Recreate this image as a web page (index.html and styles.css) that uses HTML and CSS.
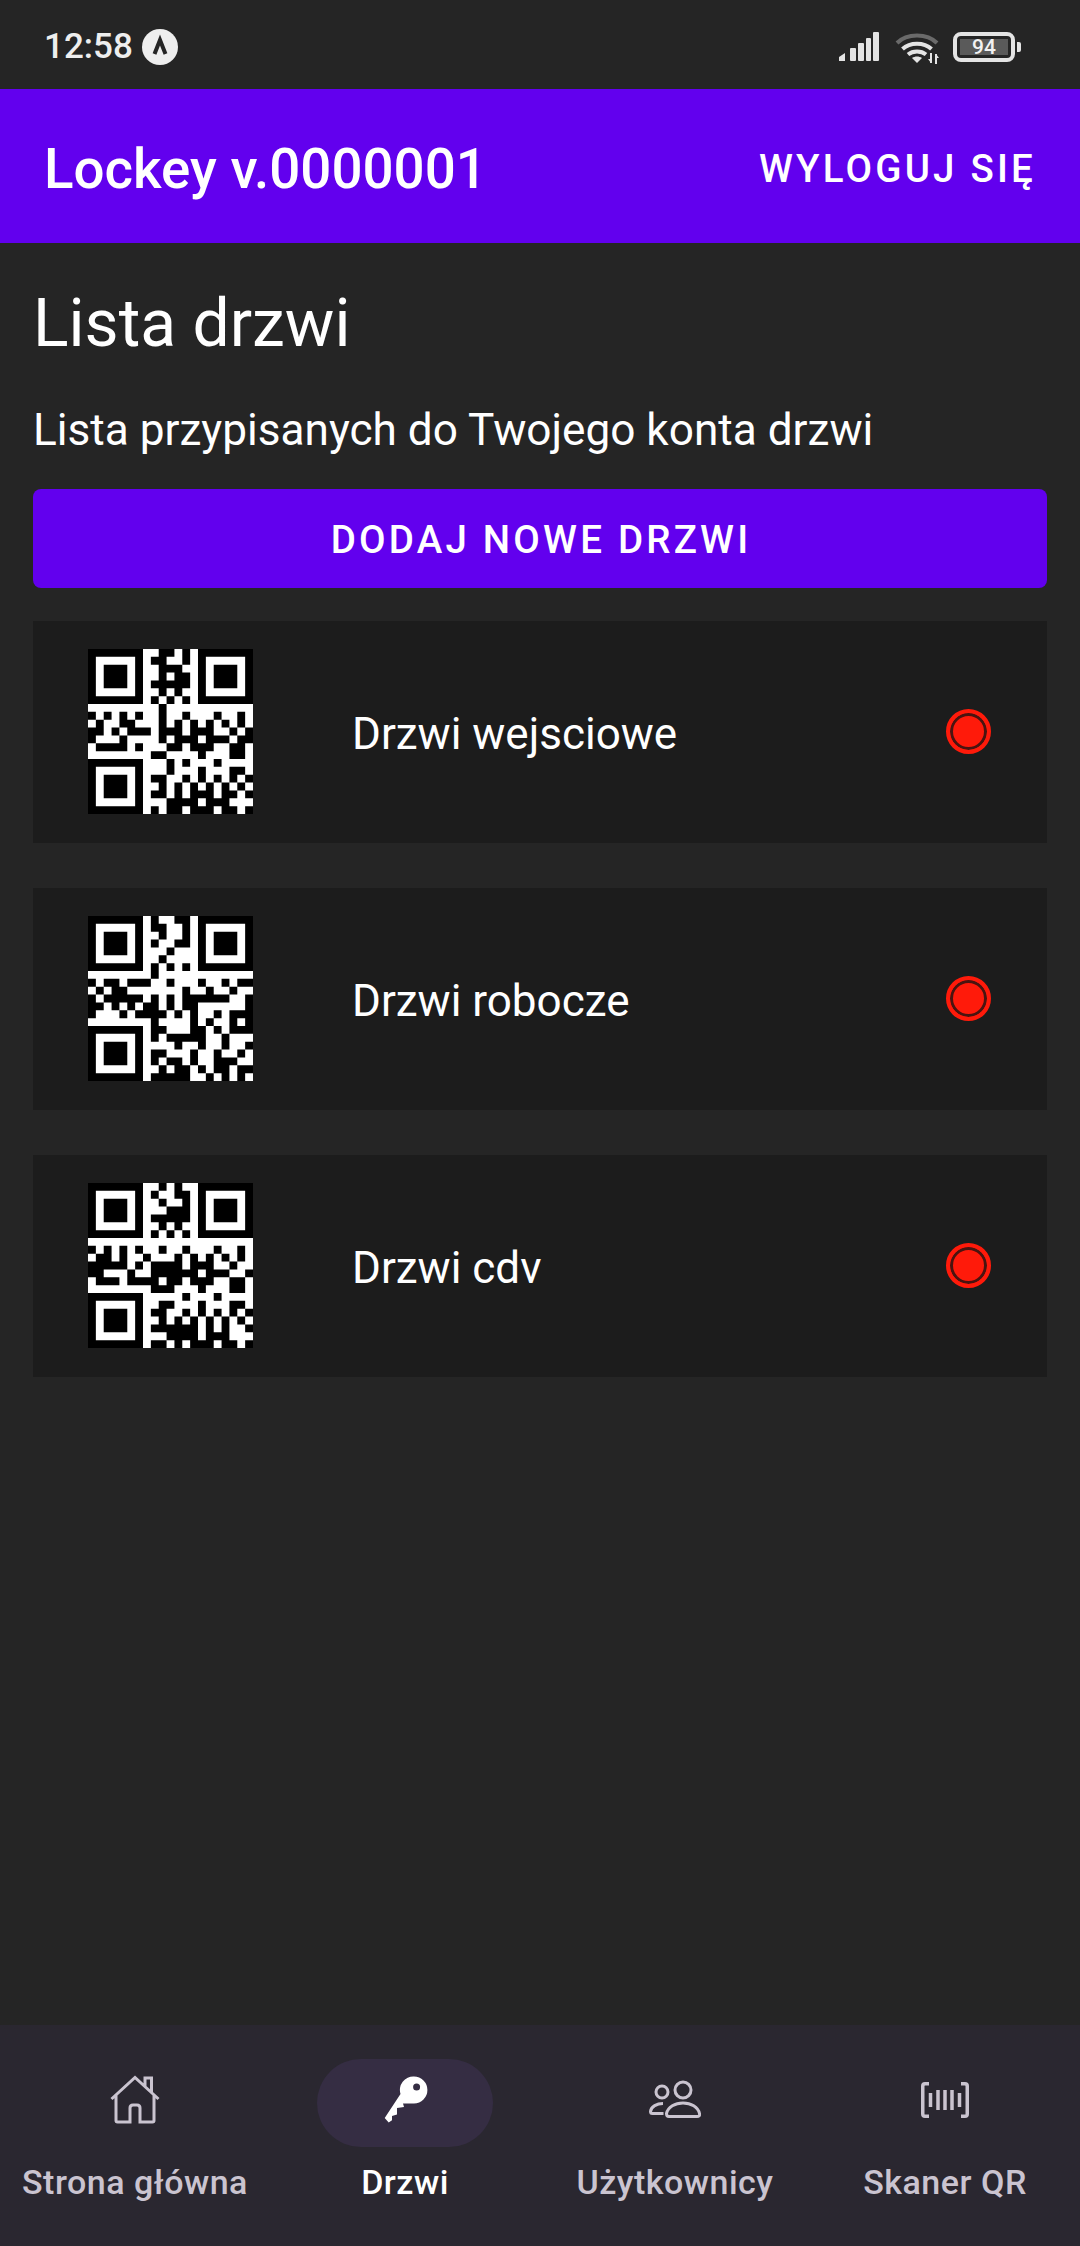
FILE: index.html
```html
<!DOCTYPE html>
<html lang="pl">
<head>
<meta charset="utf-8">
<title>Lockey</title>
<link rel="stylesheet" href="styles.css">
</head>
<body>
<div class="app">
  <div class="status">
    <div class="status-left">
      <span class="time">12:58</span>
      <svg class="badge" viewBox="0 0 36 36"><circle cx="18" cy="18" r="18" fill="#eee"/><path d="M12.500 25 18 11l5.500 14" fill="none" stroke="#252525" stroke-width="4"/></svg>
    </div>
    <div class="status-right">
      <svg class="signal" viewBox="0 0 40 29"><g fill="#e4e4e4"><path d="M0 29v-4l6-4v8z"/><rect x="11" y="16" width="6" height="13" rx="1"/><rect x="19" y="11" width="6" height="18" rx="1" /><rect x="27" y="6" width="5" height="23" rx="1"/><rect x="34" y="0" width="6" height="29" rx="1"/></g></svg>
      <svg class="wifi" viewBox="0 0 44 32"><path d="M2 11C12 1 32 1 42 11" fill="none" stroke="#6a6a6a" stroke-width="4"/><path d="M7.500 17C15 10 29 10 36.500 17M13 22.500c5-4 13-4 18 0" fill="none" stroke="#e4e4e4" stroke-width="4"/><path d="M22 31l-5-5c3-2 7-2 10 0z" fill="#e4e4e4"/><path d="M36 21v10M41 22v10" stroke="#e4e4e4" stroke-width="2"/><path d="M33 27l3 4v-4zM44 26l-3-4v4z" fill="#e4e4e4"/></svg>
      <div class="battery"><div class="battery-body"><span class="battery-level">94</span></div><span class="battery-nub"></span></div>
    </div>
  </div>

  <header class="appbar">
    <span class="app-title">Lockey v.0000001</span>
    <span class="logout">WYLOGUJ SIĘ</span>
  </header>

  <main class="content">
    <h1 class="title">Lista drzwi</h1>
    <p class="subtitle">Lista przypisanych do Twojego konta drzwi</p>
    <div class="add-btn">DODAJ NOWE DRZWI</div>

    <div class="door">
      <svg class="qr" viewBox="0 0 21 21">
        <rect width="21" height="21" fill="#fff"/>
        <path class="finder" d="M0 0h7v7H0zM1 1v5h5V1zM14 0h7v7h-7zM15 1v5h5V1zM0 14h7v7H0zM1 15v5h5v-5z"/>
        <path class="finder" d="M2 2h3v3H2zM16 2h3v3h-3zM2 16h3v3H2z"/>
        <path class="mods" d="M9 .5h2M12 .5h1M8 1.500h2M12 1.500h1M9 2.500h3M9 3.500h1M11 3.500h2M8 4.500h5M9 5.500h1M11 5.500h1M8 6.500h1M10 6.500h1M12 6.500h1M9 7.500h1M0 8.500h1M2 8.500h1M4 8.500h1M6 8.500h1M9 8.500h1M12 8.500h1M16 8.500h1M19 8.500h1M1 9.500h1M4 9.500h2M9 9.500h1M11 9.500h1M13 9.500h1M15 9.500h1M17 9.500h1M19 9.500h1M0 10.500h2M3 10.500h1M5 10.500h3M9 10.500h3M13 10.500h3M18 10.500h1M20 10.500h1M0 11.500h1M4 11.500h1M9 11.500h1M11 11.500h3M15 11.500h3M19 11.500h2M1 12.500h4M6 12.500h1M10 12.500h2M13 12.500h3M18 12.500h2M8 13.500h2M14 13.500h1M18 13.500h2M10 14.500h1M12 14.500h1M16 14.500h1M10 15.500h1M14 15.500h1M18 15.500h2M8 16.500h2M12 16.500h1M14 16.500h1M16 16.500h1M18 16.500h1M20 16.500h1M9 17.500h1M11 17.500h1M13 17.500h1M15 17.500h1M17 17.500h1M19 17.500h1M8 18.500h2M11 18.500h1M13 18.500h3M17 18.500h2M20 18.500h1M10 19.500h4M15 19.500h3M8 20.500h1M10 20.500h2M13 20.500h3M17 20.500h2M20 20.500h1"/>
      </svg>
      <span class="door-name">Drzwi wejsciowe</span>
      <span class="led"></span>
    </div>

    <div class="door">
      <svg class="qr" viewBox="0 0 21 21">
        <rect width="21" height="21" fill="#fff"/>
        <path class="finder" d="M0 0h7v7H0zM1 1v5h5V1zM14 0h7v7h-7zM15 1v5h5V1zM0 14h7v7H0zM1 15v5h5v-5z"/>
        <path class="finder" d="M2 2h3v3H2zM16 2h3v3h-3zM2 16h3v3H2z"/>
        <path class="mods" d="M8 .5h1M11 .5h2M8 1.500h2M12 1.500h1M9 2.500h1M12 2.500h1M8 3.500h1M11 3.500h2M10 4.500h1M9 5.500h1M8 6.500h1M10 6.500h1M12 6.500h1M8 7.500h1M0 8.500h1M2 8.500h2M5 8.500h3M10 8.500h1M14 8.500h1M17 8.500h1M19 8.500h2M1 9.500h1M3 9.500h2M12 9.500h1M15 9.500h1M18 9.500h1M0 10.500h1M2 10.500h5M8 10.500h1M10 10.500h1M12 10.500h6M20 10.500h1M0 11.500h2M3 11.500h1M5 11.500h1M7 11.500h2M10 11.500h1M12 11.500h2M20 11.500h1M0 12.500h1M4 12.500h1M6 12.500h4M11 12.500h1M13 12.500h1M16 12.500h1M18 12.500h3M8 13.500h1M13 13.500h1M15 13.500h1M18 13.500h1M20 13.500h1M8 14.500h2M13 14.500h2M16 14.500h1M18 14.500h3M8 15.500h1M10 15.500h5M17 15.500h1M11 16.500h1M14 16.500h1M17 16.500h1M20 16.500h1M8 17.500h2M13 17.500h1M16 17.500h1M19 17.500h1M8 18.500h1M10 18.500h2M13 18.500h1M16 18.500h3M9 19.500h1M11 19.500h2M14 19.500h1M16 19.500h2M19 19.500h2M8 20.500h5M15 20.500h1M17 20.500h1M19 20.500h1"/>
      </svg>
      <span class="door-name">Drzwi robocze</span>
      <span class="led"></span>
    </div>

    <div class="door">
      <svg class="qr" viewBox="0 0 21 21">
        <rect width="21" height="21" fill="#fff"/>
        <path class="finder" d="M0 0h7v7H0zM1 1v5h5V1zM14 0h7v7h-7zM15 1v5h5V1zM0 14h7v7H0zM1 15v5h5v-5z"/>
        <path class="finder" d="M2 2h3v3H2zM16 2h3v3h-3zM2 16h3v3H2z"/>
        <path class="mods" d="M9 .5h1M11 .5h1M8 1.500h1M11 1.500h2M9 2.500h1M12 2.500h1M10 3.500h3M8 4.500h5M9 5.500h1M11 5.500h1M8 6.500h1M10 6.500h1M12 6.500h1M0 8.500h1M2 8.500h1M4 8.500h1M6 8.500h1M9 8.500h1M12 8.500h1M16 8.500h1M19 8.500h1M1 9.500h2M4 9.500h1M7 9.500h1M11 9.500h1M13 9.500h1M15 9.500h1M17 9.500h1M19 9.500h1M0 10.500h5M6 10.500h1M8 10.500h4M13 10.500h3M18 10.500h1M0 11.500h2M5 11.500h1M8 11.500h6M15 11.500h3M20 11.500h1M1 12.500h3M5 12.500h4M10 12.500h2M13 12.500h3M18 12.500h2M8 13.500h3M14 13.500h1M18 13.500h2M12 14.500h1M16 14.500h1M9 15.500h2M14 15.500h1M18 15.500h2M8 16.500h2M12 16.500h1M14 16.500h1M16 16.500h1M18 16.500h1M20 16.500h1M9 17.500h1M11 17.500h1M13 17.500h1M15 17.500h1M17 17.500h1M19 17.500h1M8 18.500h6M15 18.500h1M17 18.500h1M20 18.500h1M10 19.500h4M15 19.500h3M8 20.500h2M11 20.500h1M13 20.500h3M17 20.500h2M20 20.500h1"/>
      </svg>
      <span class="door-name">Drzwi cdv</span>
      <span class="led"></span>
    </div>
  </main>

  <nav class="nav">
    <div class="nav-item">
      <div class="nav-icon">
        <svg class="ico-home" viewBox="0 0 50 50"><path d="M1.500 24 25 2.500 48.500 24M6 20v25.500q0 1.500 1.500 1.500H20V33q0-3 3-3h4q3 0 3 3v14h12.500q1.500 0 1.500-1.500V20M35 11V3h6.500v14.500" fill="none" stroke="#cac4d0" stroke-width="3"/></svg>
      </div>
      <span class="nav-label">Strona główna</span>
    </div>
    <div class="nav-item active">
      <div class="nav-icon">
        <svg class="ico-key" viewBox="0 0 48 48"><path fill-rule="evenodd" d="M33 .6a13.400 13.400 0 0 1 0 26.800l-3 0-8 0 1 3.600-7 1 0 6.500-5 1.500 0 4.300-3.300 2.200-4-4.600L19.500 18A13.400 13.400 0 0 1 33 .6zM35.600 7.500a3.500 3.500 0 1 0 0 7 3.500 3.500 0 0 0 0-7z" fill="#fff"/></svg>
      </div>
      <span class="nav-label">Drzwi</span>
    </div>
    <div class="nav-item">
      <div class="nav-icon">
        <svg class="ico-users" viewBox="0 0 52 40"><g fill="none" stroke="#cac4d0" stroke-width="3"><circle cx="34" cy="10" r="8"/><circle cx="13" cy="12" r="6"/><path d="M14 23.500c-6 0-12 3-12.500 8 0 1.500 1 2 2 2h11"/><path d="M34 23c-8 0-15 4-16.500 10.500 0 2 1 3 2.500 3h28c2 0 3-1 2.500-3C49 27 42 23 34 23z"/></g></svg>
      </div>
      <span class="nav-label">Użytkownicy</span>
    </div>
    <div class="nav-item">
      <div class="nav-icon">
        <svg class="ico-scan" viewBox="0 0 48 36"><g fill="none" stroke="#cac4d0" stroke-width="3.500"><path d="M8 1.750H4q-2.250 0-2.250 2.250v28q0 2.250 2.250 2.250h4M40 1.750h4q2.250 0 2.250 2.250v28q0 2.250-2.250 2.250h-4"/><path d="M9.500 11v14M17 8v20M24 8v20M31 8v20M38.500 11v14"/></g></svg>
      </div>
      <span class="nav-label">Skaner QR</span>
    </div>
  </nav>
</div>
</body>
</html>
```
FILE: styles.css
```css
* { box-sizing: border-box; }
html, body { margin: 0; padding: 0; }
body { width: 1080px; height: 2246px; background: #252525; font-family: Roboto, "Noto Sans", sans-serif; color: #fff; overflow: hidden; }
.app { display: flex; flex-direction: column; width: 1080px; height: 2246px; }

.status { flex: none; height: 89px; display: flex; align-items: flex-start; justify-content: space-between; padding: 29px 59px 0 44px; }
.status-left { display: flex; align-items: center; gap: 9px; height: 36px; }
.time { font-size: 35px; font-weight: 500; color: #eee; line-height: 36px; }
.badge { width: 36px; height: 36px; }
.status-right { display: flex; align-items: flex-start; padding-top: 3px; }
.signal { width: 40px; height: 29px; margin-right: 16px; }
.wifi { width: 44px; height: 32px; margin-right: 14px; }
.battery { display: flex; align-items: center; height: 30px; }
.battery-body { width: 62px; height: 30px; border: 4px solid #e4e4e4; border-radius: 8px; padding: 3px; display: flex; }
.battery-level { flex: 1; background: #5a5a5a; color: #f2f2f2; font-size: 21px; font-weight: 500; line-height: 16px; text-align: center; }
.battery-nub { width: 4px; height: 10px; margin-left: 2px; background: #e4e4e4; border-radius: 0 2px 2px 0; }

.appbar { flex: none; height: 154px; background: #6200ee; display: flex; align-items: center; justify-content: space-between; padding: 5px 44px 0 44px; }
.app-title { font-size: 54.7px; font-weight: 500; }
.logout { font-size: 38.5px; font-weight: 500; letter-spacing: 3.2px; }

.content { flex: 1; padding: 0 33px; display: flex; flex-direction: column; }
.title { margin: 42px 0 0; font-size: 66px; font-weight: 400; line-height: 77px; }
.subtitle { margin: 42px 0 0; font-size: 44.15px; line-height: 52px; font-weight: 400; }
.add-btn { margin-top: 33px; height: 99px; padding: 2px 0 0 2px; background: #6200ee; border-radius: 8px; display: flex; align-items: center; justify-content: center; font-size: 38.5px; font-weight: 500; letter-spacing: 3.2px; }

.door { height: 222px; margin-top: 33px; background: #1c1c1c; display: flex; align-items: center; padding: 0 56px 1px 55px; }
.door + .door { margin-top: 45px; }
.qr { flex: none; width: 165px; height: 165px; }
.finder { fill: #000; fill-rule: evenodd; }
.mods { fill: none; stroke: #000; stroke-width: 1; }
.door-name { margin-left: 99px; padding-top: 4px; flex: 1; font-size: 44px; }
.led { flex: none; width: 45px; height: 45px; border-radius: 50%; background: #ff1a0a; border: 4px solid #ff1a0a; box-shadow: inset 0 0 0 3px #4a1410; }

.nav { flex: none; height: 221px; background: #2a2730; display: grid; grid-template-columns: repeat(4, 270px); }
.nav-item { display: flex; flex-direction: column; align-items: center; padding-top: 34px; color: #cac4d0; }
.nav-icon { width: 176px; height: 88px; padding-bottom: 7px; border-radius: 44px; display: flex; align-items: center; justify-content: center; }
.active .nav-icon { background: #352d43; }
.active { color: #fff; }
.nav-label { margin-top: 15px; font-size: 34px; font-weight: 500; line-height: 40px; letter-spacing: .5px; }
.ico-home { width: 50px; height: 50px; }
.ico-key { width: 48px; height: 48px; }
.ico-users { width: 52px; height: 40px; }
.ico-scan { width: 48px; height: 36px; }
```
